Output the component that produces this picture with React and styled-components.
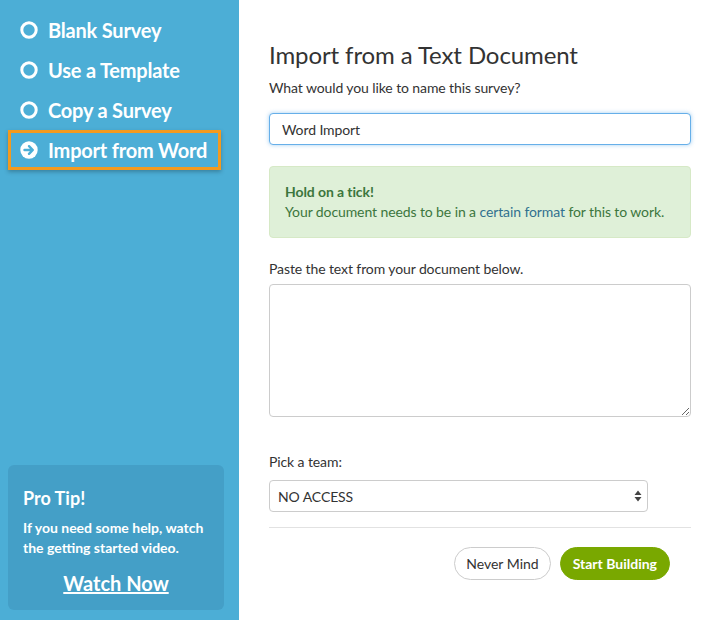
import React from 'react';
import styled, {createGlobalStyle} from 'styled-components';

const GlobalStyle = createGlobalStyle`
    html, body {
        margin: 0;
        padding: 0;
    }
    body {
        font-family: Lato, "Open Sans", sans-serif;
        color: #333;
    }
    * {
        box-sizing: border-box;
    }
`;

const Page = styled.div`
    display: flex;
    width: 716px;
    height: 620px;
    background: #fff;
`;

const Sidebar = styled.aside`
    display: flex;
    flex-direction: column;
    width: 239px;
    flex-shrink: 0;
    padding-top: 10px;
    background: #4caed6;
`;

const NavItem = styled.div`
    display: flex;
    align-items: center;
    gap: 10px;
    width: 213px;
    height: 40px;
    margin-left: 8px;
    padding-left: 9px;
    border: 3px solid ${p => (p.$active ? '#f39a1e' : 'transparent')};
    box-shadow: ${p => (p.$active ? '0 2px 4px rgba(0, 0, 0, 0.25)' : 'none')};
    color: #fff;
    font-size: 20px;
    font-weight: 700;
    letter-spacing: -0.2px;
    cursor: pointer;
`;

const ProTip = styled.div`
    margin: auto 15px 10px 8px;
    padding: 22px 15px 15px;
    border-radius: 6px;
    background: #449fc7;
    color: #fff;
    h3 {
        margin: 0 0 9px;
        font-size: 18px;
        line-height: 22px;
        font-weight: 700;
    }
    p {
        margin: 0;
        font-size: 14px;
        line-height: 20px;
        font-weight: 700;
    }
    a {
        display: block;
        margin-top: 13px;
        text-align: center;
        color: #fff;
        font-size: 20px;
        line-height: 24px;
        font-weight: 700;
        text-decoration: underline;
    }
`;

const Main = styled.main`
    flex: 1;
    padding: 40px 25px 0 30px;
    letter-spacing: -0.1px;
    h1 {
        margin: 0 0 8px;
        font-size: 24px;
        line-height: 30px;
        font-weight: 400;
        color: #333;
    }
`;

const Label = styled.label`
    display: block;
    margin-top: ${p => p.$top || 0}px;
    margin-bottom: ${p => p.$bottom || 0}px;
    font-size: 14px;
    line-height: 20px;
    color: #333;
`;

const TextInput = styled.input`
    display: block;
    width: 100%;
    height: 32px;
    padding: 0 12px;
    border: 1px solid #66afe9;
    border-radius: 4px;
    box-shadow: 0 0 4px rgba(102, 175, 233, 0.6);
    font-family: Lato, sans-serif;
    font-size: 14px;
    letter-spacing: -0.1px;
    color: #333;
    outline: none;
`;

const Alert = styled.div`
    margin-top: 21px;
    padding: 15px;
    border: 1px solid #d6e9c6;
    border-radius: 4px;
    background: #dff0d8;
    color: #3c763d;
    font-size: 14px;
    line-height: 20px;
    strong {
        display: block;
        font-weight: 700;
    }
    a {
        color: #31708f;
        text-decoration: none;
    }
`;

const TextArea = styled.textarea`
    display: block;
    width: 100%;
    height: 133px;
    padding: 8px 12px;
    border: 1px solid #ccc;
    border-radius: 4px;
    font-family: Lato, sans-serif;
    font-size: 14px;
    outline: none;
`;

const SelectWrap = styled.div`
    position: relative;
    width: 379px;
    svg {
        position: absolute;
        right: 6px;
        top: 10px;
        pointer-events: none;
    }
`;

const Select = styled.select`
    display: block;
    width: 100%;
    height: 32px;
    padding: 0 8px;
    border: 1px solid #ccc;
    border-radius: 4px;
    background: #fff;
    appearance: none;
    font-family: Lato, sans-serif;
    font-size: 14px;
    letter-spacing: -0.1px;
    color: #333;
    outline: none;
`;

const Divider = styled.hr`
    margin: 15px 0 19px;
    border: 0;
    border-top: 1px solid #e2e2e2;
`;

const Actions = styled.div`
    display: flex;
    justify-content: flex-end;
    gap: 9px;
    padding-right: 21px;
`;

const Button = styled.button`
    height: 33px;
    padding: 0 ${p => (p.$primary ? 12 : 11)}px;
    border: 1px solid ${p => (p.$primary ? '#79a800' : '#ccc')};
    border-radius: 17px;
    background: ${p => (p.$primary ? '#79a800' : '#fff')};
    color: ${p => (p.$primary ? '#fff' : '#333')};
    font-family: Lato, sans-serif;
    font-size: 14px;
    font-weight: ${p => (p.$primary ? 700 : 400)};
    cursor: pointer;
`;

function RadioIcon() {
    return (
        <svg width="18" height="18" viewBox="0 0 18 18">
            <circle cx="9" cy="9" r="7.2" fill="none" stroke="#fff" strokeWidth="3"/>
        </svg>
    );
}

function ArrowIcon() {
    return (
        <svg width="18" height="18" viewBox="0 0 18 18">
            <circle cx="9" cy="9" r="8.7" fill="#fff"/>
            <path d="M4.5 9h8M9 5.2l3.8 3.8L9 12.8" fill="none" stroke="#4caed6" strokeWidth="2.4" strokeLinecap="round" strokeLinejoin="round"/>
        </svg>
    );
}

const navItems = ['Blank Survey', 'Use a Template', 'Copy a Survey', 'Import from Word'];

export default function App() {
    return (
        <Page>
            <GlobalStyle/>
            <Sidebar>
                {navItems.map((item, i) => {
                    const active = i === navItems.length - 1;
                    return (
                        <NavItem key={item} $active={active}>
                            {active ? <ArrowIcon/> : <RadioIcon/>}
                            {item}
                        </NavItem>
                    );
                })}
                <ProTip>
                    <h3>Pro Tip!</h3>
                    <p>If you need some help, watch the getting started video.</p>
                    <a href="#video">Watch Now</a>
                </ProTip>
            </Sidebar>
            <Main>
                <h1>Import from a Text Document</h1>
                <Label $bottom={15}>What would you like to name this survey?</Label>
                <TextInput defaultValue="Word Import"/>
                <Alert>
                    <strong>Hold on a tick!</strong>
                    Your document needs to be in a <a href="#format">certain format</a> for this to work.
                </Alert>
                <Label $top={21} $bottom={5}>Paste the text from your document below.</Label>
                <TextArea/>
                <Label $top={35} $bottom={8}>Pick a team:</Label>
                <SelectWrap>
                    <Select defaultValue="none">
                        <option value="none">NO ACCESS</option>
                    </Select>
                    <svg width="8" height="12" viewBox="0 0 8 12">
                        <path d="M4 0.5L7.5 5H0.5z M4 11.5L0.5 7H7.5z" fill="#444"/>
                    </svg>
                </SelectWrap>
                <Divider/>
                <Actions>
                    <Button>Never Mind</Button>
                    <Button $primary>Start Building</Button>
                </Actions>
            </Main>
        </Page>
    );
}
